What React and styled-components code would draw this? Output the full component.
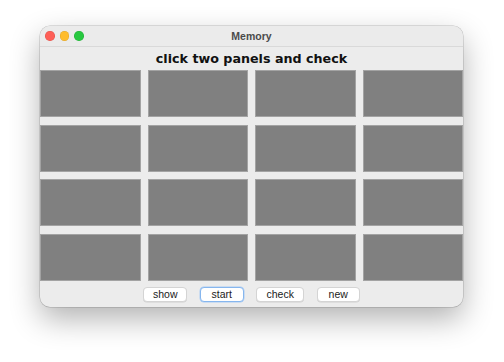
import React from "react";
import styled, { createGlobalStyle } from "styled-components";

const Global = createGlobalStyle`
  html, body { margin: 0; padding: 0; background: #ffffff; }
  body { font-family: "Liberation Sans", Arial, sans-serif; }
`;

const Page = styled.div`
  width: 504px;
  height: 362px;
  padding: 26px 0 0 40px;
  box-sizing: border-box;
`;

const Window = styled.div`
  width: 423px;
  height: 281px;
  background: #ececec;
  border-radius: 10px;
  overflow: hidden;
  box-shadow: 0 0 0 0.5px rgba(0, 0, 0, 0.22), 0 12px 30px rgba(0, 0, 0, 0.3);
  display: flex;
  flex-direction: column;
`;

const TitleBar = styled.div`
  position: relative;
  height: 20px;
  flex: none;
  border-bottom: 1px solid #d9d9d9;
  background: #ebebeb;
  display: flex;
  align-items: center;
  padding-left: 5px;
  gap: 5px;
`;

const Light = styled.span`
  width: 9.5px;
  height: 9.5px;
  border-radius: 50%;
  background: ${(p) => p.$c};
  box-shadow: inset 0 0 0 0.5px rgba(0, 0, 0, 0.12);
`;

const Title = styled.div`
  position: absolute;
  left: 0;
  right: 0;
  top: 0;
  bottom: 0;
  display: flex;
  align-items: center;
  justify-content: center;
  font: bold 10.5px "Liberation Sans", Arial, sans-serif;
  color: #4a4a4a;
  pointer-events: none;
`;

const Header = styled.div`
  height: 23px;
  flex: none;
  display: flex;
  align-items: center;
  justify-content: center;
  font: bold 12.7px "DejaVu Sans", Verdana, sans-serif;
  color: #111;
`;

const Grid = styled.div`
  height: 211px;
  flex: none;
  display: grid;
  grid-template-columns: repeat(4, 1fr);
  grid-template-rows: repeat(4, 1fr);
  column-gap: 7px;
  row-gap: 7.5px;
`;

const Card = styled.div`
  background: #808080;
  border: 1px solid #a3a3a3;
  box-sizing: border-box;
`;

const Buttons = styled.div`
  flex: 1;
  display: flex;
  align-items: center;
  justify-content: center;
  gap: 12.5px;
  padding-top: 1px;
`;

const Button = styled.button`
  width: ${(p) => p.$w}px;
  height: 15px;
  padding: 0;
  background: #ffffff;
  border: 1px solid ${(p) => (p.$focus ? "#86b6ee" : "#d4d4d4")};
  box-shadow: ${(p) =>
    p.$focus ? "0 0 0 0.5px #a9cbf3" : "0 0.5px 0.5px rgba(0,0,0,0.12)"};
  border-radius: 4px;
  font: 10.5px "Liberation Sans", Arial, sans-serif;
  color: #1a1a1a;
  line-height: 13px;
`;

export default function App() {
  const cards = Array.from({ length: 16 });
  return (
    <Page>
      <Global />
      <Window>
        <TitleBar>
          <Light $c="#fe5f57" />
          <Light $c="#febc2e" />
          <Light $c="#28c840" />
          <Title>Memory</Title>
        </TitleBar>
        <Header>click two panels and check</Header>
        <Grid>
          {cards.map((_, i) => (
            <Card key={i} />
          ))}
        </Grid>
        <Buttons>
          <Button $w={44}>show</Button>
          <Button $w={44} $focus>
            start
          </Button>
          <Button $w={48}>check</Button>
          <Button $w={43}>new</Button>
        </Buttons>
      </Window>
    </Page>
  );
}
